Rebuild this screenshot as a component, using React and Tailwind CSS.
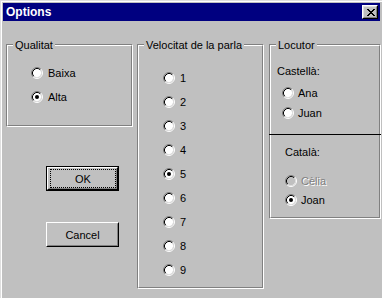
import React from 'react';

const font = "font-['Liberation_Sans',Arial,sans-serif]";

function Radio({ checked, disabled }) {
  return (
    <svg width="12" height="12" viewBox="0 0 12 12" className="shrink-0">
      <circle cx="6" cy="6" r="4.2" fill={disabled ? '#c0c0c0' : '#fff'} />
      <path d="M2.11 9.89 A5.5 5.5 0 0 1 9.89 2.11" stroke="#808080" fill="none" />
      <path d="M9.89 2.11 A5.5 5.5 0 0 1 2.11 9.89" stroke="#fff" fill="none" />
      <path d="M2.82 9.18 A4.5 4.5 0 0 1 9.18 2.82" stroke="#000" fill="none" />
      <path d="M9.18 2.82 A4.5 4.5 0 0 1 2.82 9.18" stroke="#dfdfdf" fill="none" />
      {checked && <circle cx="6" cy="6" r="2" fill="#000" />}
    </svg>
  );
}

function Option({ label, checked, disabled, gap = 'gap-[5px]' }) {
  return (
    <div className={`flex h-[12px] items-center ${gap}`}>
      <Radio checked={checked} disabled={disabled} />
      <span
        className={`leading-[12px] ${
          disabled ? 'text-[#808080] [text-shadow:1px_1px_0_#fff]' : 'text-black'
        }`}
      >
        {label}
      </span>
    </div>
  );
}

// etched frame: dark line outside top-left, white line inside
function Group({ label, className, children }) {
  return (
    <div
      className={`border border-t-[#808080] border-l-[#808080] border-b-white border-r-white ${className}`}
    >
      <div className="flex h-full flex-col border border-t-white border-l-white border-b-[#808080] border-r-[#808080]">
        <span className="-mt-[7px] ml-[5px] w-fit bg-[#c0c0c0] px-[2px] leading-[12px]">{label}</span>
        {children}
      </div>
    </div>
  );
}

function Button({ label, isDefault, className }) {
  const face = (
    <div className="h-full border border-t-white border-l-white border-b-black border-r-black">
      <div className="flex h-full items-center justify-center border border-t-transparent border-l-transparent border-b-[#808080] border-r-[#808080]">
        {isDefault ? (
          <div className="ml-[1px] flex h-full w-full items-center justify-center border border-dotted border-black leading-[12px]">
            {label}
          </div>
        ) : (
          <span className="leading-[12px]">{label}</span>
        )}
      </div>
    </div>
  );
  return (
    <div className={`h-[25px] w-[73px] ${isDefault ? 'border border-black' : ''} ${className}`}>
      {face}
    </div>
  );
}

function CloseIcon() {
  const px = [
    [0, 0], [1, 0], [6, 0], [7, 0],
    [1, 1], [2, 1], [5, 1], [6, 1],
    [2, 2], [3, 2], [4, 2], [5, 2],
    [3, 3], [4, 3],
    [2, 4], [3, 4], [4, 4], [5, 4],
    [1, 5], [2, 5], [5, 5], [6, 5],
    [0, 6], [1, 6], [6, 6], [7, 6],
  ];
  return (
    <svg width="8" height="7" viewBox="0 0 8 7" shapeRendering="crispEdges">
      {px.map(([x, y]) => (
        <rect key={`${x}-${y}`} x={x} y={y} width="1" height="1" fill="#000" />
      ))}
    </svg>
  );
}

export default function App() {
  return (
    <div
      className={`h-[298px] w-[382px] overflow-hidden border-l border-t border-[#dfdfdf] bg-[#c0c0c0] text-[11px] text-black ${font}`}
    >
      <div className="h-full border-l border-t border-white p-[1px]">
        {/* Title bar */}
        <div className="flex h-[18px] w-[377px] items-center justify-between bg-[#000080] pl-[3px] pr-[2px]">
          <span className="text-[12px] font-bold leading-[12px] text-white">Options</span>
          <div className="h-[14px] w-[16px] border border-t-white border-l-white border-b-black border-r-black">
            <div className="flex h-full items-center justify-center border border-t-[#dfdfdf] border-l-[#dfdfdf] border-b-[#808080] border-r-[#808080] bg-[#c0c0c0] pl-[1px]">
              <CloseIcon />
            </div>
          </div>
        </div>

        <div className="mt-[23px] flex items-start">
          {/* Left column */}
          <div className="ml-[3px] flex w-[127px] flex-col">
            <Group label="Qualitat" className="h-[83px] w-[127px]">
              <div className="mt-[16px] flex flex-col gap-[12px] pl-[23px]">
                <Option label="Baixa" />
                <Option label="Alta" checked />
              </div>
            </Group>
            <Button label="OK" isDefault className="ml-[40px] mt-[39px]" />
            <Button label="Cancel" className="ml-[40px] mt-[31px]" />
          </div>

          {/* Speed */}
          <Group label="Velocitat de la parla" className="ml-[4px] h-[245px] w-[127px]">
            <div className="mt-[21px] flex flex-col gap-[12px] pl-[24px]">
              {['1', '2', '3', '4', '5', '6', '7', '8', '9'].map((n) => (
                <Option key={n} label={n} checked={n === '5'} />
              ))}
            </div>
          </Group>

          {/* Speaker */}
          <Group label="Locutor" className="ml-[5px] h-[175px] w-[112px]">
            <span className="mt-[14px] pl-[6px] leading-[12px]">Castellà:</span>
            <div className="mt-[10px] flex flex-col gap-[8px] pl-[11px]">
              <Option label="Ana" gap="gap-[4px]" />
              <Option label="Juan" gap="gap-[4px]" />
            </div>
            <div className="-mx-[2px] mt-[15px] h-[1px] bg-black" />
            <span className="mt-[11px] pl-[14px] leading-[12px]">Català:</span>
            <div className="mt-[17px] flex flex-col gap-[7px] pl-[14px]">
              <Option label="Cèlia" disabled gap="gap-[4px]" />
              <Option label="Joan" checked gap="gap-[4px]" />
            </div>
          </Group>
        </div>
      </div>
    </div>
  );
}
